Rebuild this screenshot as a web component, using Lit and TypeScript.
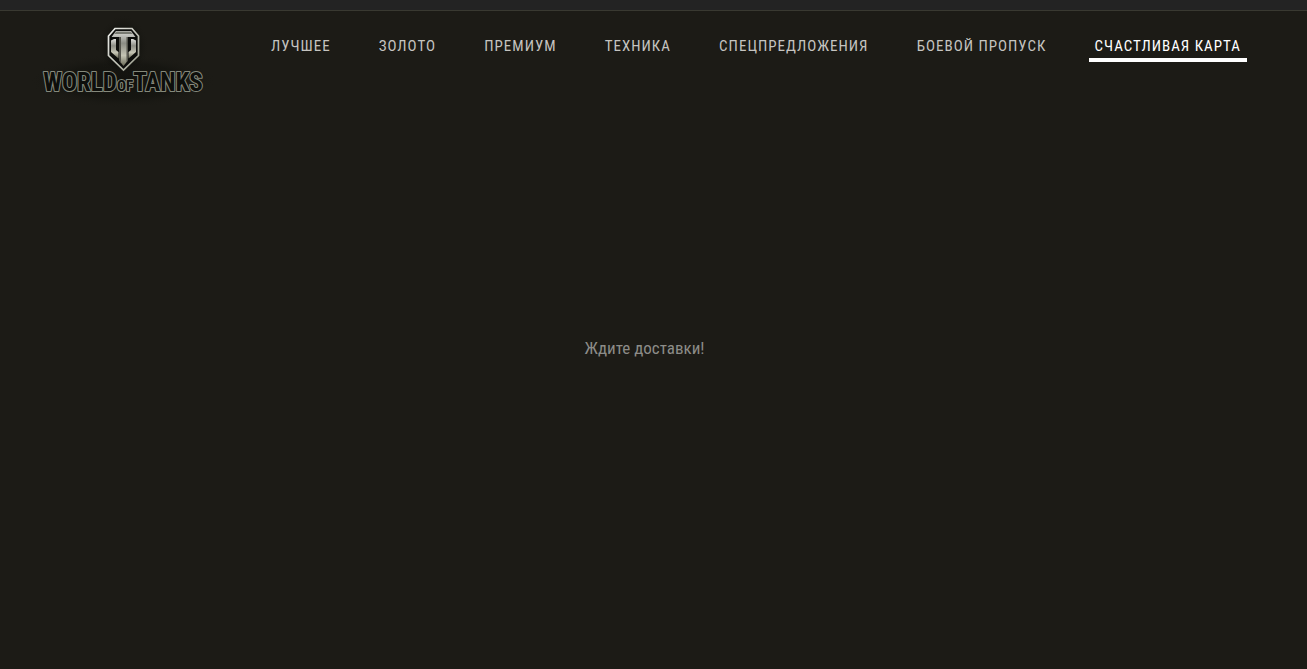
import { LitElement, html, css, nothing } from "lit";
import { customElement, property, state } from "lit/decorators.js";

@customElement("wot-logo")
class WotLogo extends LitElement {
  static styles = css`
    :host {
      display: block;
      width: 180px;
      height: 95px;
    }
    .art {
      display: block;
      width: 100%;
      height: 100%;
      overflow: visible;
    }
    .word {
      font-family: "Roboto Condensed", "Liberation Sans Narrow", "Liberation Sans", sans-serif;
      font-weight: 700;
      fill: #0d0e0b;
      stroke: #85897c;
      stroke-width: 2px;
      stroke-linejoin: round;
      paint-order: stroke;
    }
    .large {
      font-size: 25px;
    }
    .small {
      font-size: 15px;
    }
  `;

  render() {
    return html`
      <svg class="art" viewBox="0 0 180 95" role="img" aria-label="World of Tanks">
        <defs>
          <linearGradient id="metal" x1="0" y1="0" x2="0" y2="1">
            <stop offset="0" stop-color="#dddeda" />
            <stop offset="0.35" stop-color="#8c8d85" />
            <stop offset="0.7" stop-color="#c4c4b4" />
            <stop offset="1" stop-color="#696956" />
          </linearGradient>
          <linearGradient id="rim" x1="0" y1="0" x2="1" y2="1">
            <stop offset="0" stop-color="#f0f1ed" />
            <stop offset="1" stop-color="#969887" />
          </linearGradient>
          <radialGradient id="shade">
            <stop offset="0" stop-color="#0b0c08" stop-opacity="0.6" />
            <stop offset="0.65" stop-color="#0d0e0a" stop-opacity="0.4" />
            <stop offset="1" stop-color="#1c1b16" stop-opacity="0" />
          </radialGradient>
        </defs>
        <ellipse cx="88" cy="66" rx="94" ry="27" fill="url(#shade)" />
        <ellipse cx="88" cy="32" rx="26" ry="32" fill="url(#shade)" />
        <text class="word" y="76" x="88" text-anchor="middle"><tspan class="large">WORLD</tspan><tspan class="small">OF</tspan><tspan class="large">TANKS</tspan></text>
        <path d="M80 13.500H97L103.500 21V40.500L88.500 55L73.500 40.500V21Z" fill="#0c0d0b" stroke="url(#rim)" stroke-width="1.7" />
        <path d="M81 16H96L100.500 22H92.500V46L88.500 51L84.500 46V22H76.500Z" fill="url(#metal)" />
        <path d="M76 25.500L79 24H81V35L83.500 37V43.500L76 37Z" fill="url(#metal)" />
        <path d="M101 25.500L98 24H96V35L93.500 37V43.500L101 37Z" fill="url(#metal)" />
        <path d="M84.500 22V46L86 48V22ZM91.500 22V47L92.500 46V22Z" fill="#53534b" />
        <path d="M81.500 16.500H95.500L98 19H79Z" fill="#777971" />
      </svg>
    `;
  }
}

@customElement("shop-nav")
class ShopNav extends LitElement {
  static styles = css`
    :host {
      display: block;
    }
    .list {
      display: flex;
      justify-content: space-between;
      margin: 0;
      padding: 0;
      list-style: none;
    }
    .link {
      display: block;
      padding: 0 6px;
      border-bottom: 4px solid transparent;
      color: #c5c4c0;
      font-size: 15px;
      line-height: 24px;
      letter-spacing: 1px;
      text-decoration: none;
      text-transform: uppercase;
      white-space: nowrap;
    }
    .link:hover,
    .link[aria-current] {
      color: #fff;
    }
    .link[aria-current] {
      border-color: #fff;
    }
  `;

  @property({ attribute: false }) items: string[] = [];
  @property() active = "";

  render() {
    return html`
      <nav>
        <ul class="list">
          ${this.items.map(
            (item) => html`<li><a class="link" href="#" aria-current=${item === this.active ? "page" : nothing}>${item}</a></li>`
          )}
        </ul>
      </nav>
    `;
  }
}

@customElement("app-root")
class AppRoot extends LitElement {
  static styles = css`
    :host {
      display: flex;
      flex-direction: column;
      min-height: 100vh;
      background: #1c1b16;
      font-family: "Roboto Condensed", "Liberation Sans Narrow", "Liberation Sans", sans-serif;
    }
    .strip {
      height: 10px;
      background: #232323;
      border-bottom: 1px solid #393931;
    }
    .header {
      display: flex;
      align-items: flex-start;
      gap: 50px;
      padding: 4px 60px 0 35px;
    }
    .home {
      flex: none;
    }
    .nav {
      flex: 1;
      padding-top: 19px;
    }
    .content {
      flex: 1;
      display: grid;
      place-items: center;
      padding: 0 18px 84px 0;
    }
    .message {
      margin: 0;
      color: #8c8c88;
      font-size: 17px;
      line-height: 24px;
    }
  `;

  @state() private sections = [
    "Лучшее",
    "Золото",
    "Премиум",
    "Техника",
    "Спецпредложения",
    "Боевой пропуск",
    "Счастливая карта",
  ];

  render() {
    return html`
      <div class="strip"></div>
      <header class="header">
        <a class="home" href="#" aria-label="World of Tanks"><wot-logo></wot-logo></a>
        <shop-nav class="nav" .items=${this.sections} active="Счастливая карта"></shop-nav>
      </header>
      <main class="content"><p class="message">Ждите доставки!</p></main>
    `;
  }
}
